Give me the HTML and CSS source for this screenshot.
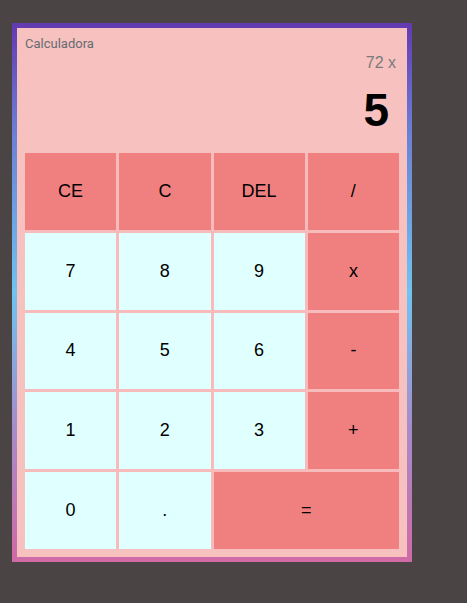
FILE: index.html
```html
<!DOCTYPE html>
<html lang="es">
<head>
<meta charset="utf-8">
<title>Calculadora</title>
<link rel="stylesheet" href="styles.css">
</head>
<body>
<div class="frame">
  <div class="calc">
    <div class="display">
      <div class="title">Calculadora</div>
      <div class="prev">72 x</div>
      <div class="current">5</div>
    </div>
    <div class="keys">
      <button class="key op">CE</button>
      <button class="key op">C</button>
      <button class="key op">DEL</button>
      <button class="key op">/</button>
      <button class="key num">7</button>
      <button class="key num">8</button>
      <button class="key num">9</button>
      <button class="key op">x</button>
      <button class="key num">4</button>
      <button class="key num">5</button>
      <button class="key num">6</button>
      <button class="key op">-</button>
      <button class="key num">1</button>
      <button class="key num">2</button>
      <button class="key num">3</button>
      <button class="key op">+</button>
      <button class="key num">0</button>
      <button class="key num">.</button>
      <button class="key op wide">=</button>
    </div>
  </div>
</div>
</body>
</html>
```

FILE: styles.css
```css
html, body {
  margin: 0;
  padding: 0;
}
body {
  background: #4a4544;
  width: 467px;
  height: 603px;
  font-family: "Liberation Sans", Arial, sans-serif;
}
.frame {
  margin: 23px 0 0 12px;
  width: 400px;
  height: 539px;
  box-sizing: border-box;
  padding: 5px;
  background: linear-gradient(to bottom, #6339b0 0%, #6b7fd4 20%, #6fc3f1 50%, #a58ccb 75%, #d06aa5 100%);
}
.calc {
  height: 100%;
  box-sizing: border-box;
  background: #f7c1c0;
  padding: 8px;
  display: flex;
  flex-direction: column;
}
.display {
  height: 117px;
  display: flex;
  flex-direction: column;
}
.title {
  font-family: Roboto, "Liberation Sans", Arial, sans-serif;
  font-size: 13px;
  line-height: 15px;
  color: #666b72;
}
.prev {
  margin-top: 3px;
  font-size: 16px;
  line-height: 18px;
  color: #7a7a7a;
  text-align: right;
  padding-right: 3px;
}
.current {
  margin-top: 12px;
  font-size: 46px;
  line-height: 53px;
  font-weight: bold;
  color: #000;
  text-align: right;
  padding-right: 10px;
}
.keys {
  flex: 1;
  display: grid;
  grid-template-columns: repeat(4, 1fr);
  grid-template-rows: repeat(5, 1fr);
  gap: 3px;
  background: #f8bbbb;
}
.key {
  border: none;
  margin: 0;
  padding: 0;
  font-family: "Liberation Sans", Arial, sans-serif;
  font-size: 18px;
  color: #000;
  display: flex;
  align-items: center;
  justify-content: center;
}
.op {
  background: #f08080;
}
.num {
  background: #e0ffff;
}
.wide {
  grid-column: span 2;
}
```
